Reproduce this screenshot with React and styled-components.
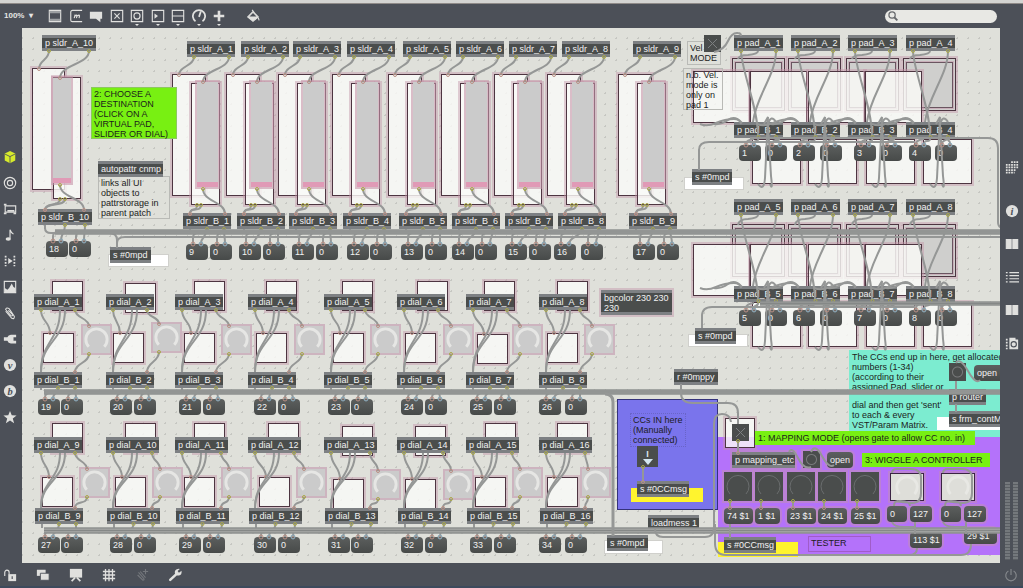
import React, { useState } from "react";
import styled, { createGlobalStyle, css } from "styled-components";

const GlobalStyle = createGlobalStyle`
  * {
    box-sizing: border-box;
  }

  body {
    margin: 0;
    background-color: #4c5058;
    font-family: "Liberation Sans", Arial, sans-serif;
    font-size: 9px;
    line-height: 10px;
  }

  button,
  input,
  select {
    font: inherit;
    margin: 0;
    padding: 0;
  }
`;

/* patch coordinate of the canvas' top left corner */
const ORIGIN = { x: 22, y: 28 };

const Window = styled.div`
  display: flex;
  flex-direction: column;
  min-height: 100vh;
`;

const TitleStrip = styled.div`
  background-color: #d4d4d2;
  border-bottom: 1px solid #8f8a88;
  height: 4px;
`;

const TopBar = styled.header`
  align-items: center;
  background-color: #4c5058;
  display: flex;
  height: 24px;
  padding: 0 26px 0 4px;
`;

const Zoom = styled.label`
  align-items: center;
  color: #e6e6e4;
  display: flex;
  font-size: 8px;
  font-weight: bold;
  gap: 3px;
  margin-right: 14px;

  select {
    appearance: none;
    background: none;
    border: 0;
    color: inherit;
    width: 22px;
  }
`;

const ToolGroup = styled.div`
  display: flex;
  justify-content: space-between;
  width: 180px;
`;

const IconButton = styled.button`
  align-items: center;
  background: none;
  border: 0;
  color: ${({ $color }) => $color || "#e0e0de"};
  display: flex;
  height: 16px;
  justify-content: center;
  position: relative;
  width: 16px;

  svg {
    display: block;
    height: 14px;
    width: 14px;
  }
`;

const Caret = styled.span`
  border: 2px solid transparent;
  border-bottom: 0;
  border-top-color: #e4e4e2;
  bottom: -2px;
  left: 6px;
  position: absolute;
`;

const PaintButton = styled(IconButton)`
  margin-left: 18px;
`;

const Search = styled.label`
  align-items: center;
  background-color: #e8e8e4;
  border-radius: 7px;
  color: #66686c;
  display: flex;
  height: 13px;
  margin-left: auto;
  padding: 0 3px;
  width: 112px;

  svg {
    height: 10px;
    width: 10px;
  }

  input {
    background: none;
    border: 0;
    flex: 1;
    min-width: 0;
    outline: 0;
  }
`;

const Main = styled.main`
  display: flex;
  flex: 1;
`;

const LeftBar = styled.nav`
  align-items: center;
  display: flex;
  flex-direction: column;
  gap: 10px;
  padding: 121px 3px 0 1px;
  width: 22px;
`;

const RightBar = styled.nav`
  align-items: center;
  display: flex;
  flex-direction: column;
  gap: 17px;
  padding-top: 131px;
  width: 23px;

  button:first-child {
    margin-bottom: 11px;
  }
`;

const Meters = styled.div`
  display: flex;
  gap: 3px;
  margin: auto 0 3px;
`;

const Meter = styled.div`
  background: repeating-linear-gradient(#74787c 0 2px, #5a5e63 2px 3px);
  height: 78px;
  width: 5px;
`;

const BottomBar = styled.footer`
  align-items: center;
  border-bottom: 2px solid #3d4a5c;
  display: flex;
  gap: 17px;
  height: 25px;
  padding: 0 4px 0 2px;

  button:last-child {
    margin-left: auto;
  }
`;

const Canvas = styled.section`
  background-color: #dfe0da;
  background-image: radial-gradient(#c6c7c2 1px, transparent 1px);
  background-position: 6px 5px;
  background-size: 11px 11px;
  flex: 1;
  min-width: 0;
  overflow: hidden;
  position: relative;
`;

const placed = css`
  height: ${({ $h }) => ($h ? `${$h}px` : "auto")};
  left: ${({ $x }) => $x - ORIGIN.x}px;
  position: absolute;
  top: ${({ $y }) => $y - ORIGIN.y}px;
  width: ${({ $w }) => $w}px;
`;

const halo = css`
  box-shadow: 0 0 0 2px rgba(196, 148, 168, 0.45);
`;

const ObjectBox = styled.div`
  ${placed}
  background-color: #4a4d4c;
  border: solid #7d8083;
  border-width: 3px 0;
  color: #f2f2f2;
  min-height: 16px;
  padding-left: 3px;
  white-space: pre;
  ${({ $halo }) => $halo && halo}
`;

const MessageBox = styled.button`
  ${placed}
  background: linear-gradient(#5c5f5e, #474a49);
  border: 0;
  border-radius: 4px;
  color: #f2f2f2;
  padding-left: 3px;
  text-align: left;
  white-space: pre;
  ${({ $halo }) => $halo && halo}
`;

const Frame = styled.div`
  ${placed}
  background-color: ${({ $fill }) => $fill || "rgba(250, 250, 248, 0.82)"};
  border: 1px solid #4d3541;
  ${halo}
`;

const PadArea = styled.div`
  ${placed}
  background-color: #cfcfcd;
  border: 1px solid #4d3541;
  ${halo}

  &::before {
    border: 1px solid #6a5560;
    bottom: 2px;
    content: "";
    left: 2px;
    outline: 1px solid #c9b0ba;
    position: absolute;
    right: 2px;
    top: 3px;
  }
`;

const Panel = styled.div`
  ${placed}
  background-color: ${({ $fill }) => $fill};
  border: 1px solid ${({ $line, $fill }) => $line || $fill};
`;

const Comment = styled.div`
  ${placed}
  background-color: ${({ $fill }) => $fill || "transparent"};
  border: 1px ${({ $dotted }) => ($dotted ? "dotted" : "solid")}
    ${({ $line }) => $line || "transparent"};
  color: #1c1c1c;
  padding: 1px 2px;
  white-space: pre;
`;

const Slider = styled.input.attrs({ type: "range" })`
  ${placed}
  appearance: none;
  background: linear-gradient(#cbcbcb calc(100% - 5px), #e09ab6 0);
  direction: rtl;
  outline: 2px solid rgba(196, 148, 168, 0.6);
  writing-mode: vertical-lr;

  &::-webkit-slider-thumb {
    appearance: none;
    height: 1px;
    width: 1px;
  }
`;

const DialBox = styled.label`
  ${placed}
  background-color: ${({ $fill }) => $fill};
  border: ${({ $frame }) => $frame};
  ${({ $halo }) => $halo && halo}

  svg {
    display: block;
    height: 100%;
    width: 100%;
  }

  input {
    height: 100%;
    inset: 0;
    opacity: 0;
    position: absolute;
    width: 100%;
  }
`;

const Toggle = styled.input.attrs({ type: "checkbox" })`
  ${placed}
  appearance: none;
  background:
    linear-gradient(45deg, transparent 46%, #7d8081 46% 54%, transparent 54%)
      center / 9px 9px no-repeat,
    linear-gradient(-45deg, transparent 46%, #7d8081 46% 54%, transparent 54%)
      center / 9px 9px no-repeat,
    #4a4d4c;
`;

const Bang = styled.button`
  ${placed}
  background: radial-gradient(circle, #4a4d4c 4px, #77797a 5px, #4a4d4c 6px);
  border: 0;
  ${({ $halo }) => $halo && halo}
`;

const Receiver = styled.div`
  ${placed}
  align-items: center;
  background-color: #4a4d4c;
  color: #d9e6ee;
  display: flex;
  flex-direction: column;
  font-weight: bold;
  justify-content: center;
`;

const Triangle = styled.span`
  border: 5px solid transparent;
  border-bottom: 0;
  border-top: 6px solid #d3e6f0;
`;

const Cords = styled.svg`
  fill: none;
  height: 100%;
  inset: 0;
  overflow: visible;
  pointer-events: none;
  position: absolute;
  stroke: #959796;
  stroke-width: 2px;
  width: 100%;
`;

const icons = {
  object: (
    <>
      <path d="M1.500 1.500h13v13h-13z" />
      <path d="M2 3.500h12M2 12.500h12" strokeWidth="2.500" stroke="#9c9fa2" />
    </>
  ),
  message: (
    <>
      <path d="M15 1.500H4a2 2 0 0 0-2 2v9a2 2 0 0 0 2 2h11" />
      <path d="M6 10.500l1-4M7 8q2-2 2 0l-.5 2.500M9.500 8q2.500-2 2.500 0l-.5 2.500" />
    </>
  ),
  comment: <path d="M1 3h14v8h-2v4l-5-4H1z" fill="currentColor" stroke="none" />,
  toggle: <path d="M1.500 1.500h13v13h-13zM5 5l6 6M11 5l-6 6" />,
  button: (
    <>
      <path d="M1.500 1.500h13v13h-13z" />
      <circle cx="8" cy="8" r="3.500" />
    </>
  ),
  number: (
    <>
      <path d="M1.500 1.500h13v13h-13z" />
      <path d="M4 5l4 3-4 3z" fill="currentColor" stroke="none" />
    </>
  ),
  slider: <path d="M1.500 1.500h13v13h-13zM2 8h12" />,
  dial: <path d="M4 14A7 7 0 1 1 12 14M8 9l2-6" strokeWidth="2" />,
  plus: <path d="M8 2v12M2 8h12" strokeWidth="3" />,
  paint: (
    <>
      <path d="M2 9l6-6 6 6-6 5zM7 1l3 4" fill="currentColor" />
      <path d="M4 8.500h8l-4-4z" fill="#4c5058" stroke="none" />
      <path d="M14 10l1 3" />
    </>
  ),
  cube: (
    <>
      <path d="M8 1l6 3v8l-6 3-6-3V4z" fill="currentColor" stroke="none" />
      <path d="M2 4.500l6 3 6-3M8 7.500V15" stroke="#4c5058" strokeWidth="1" />
    </>
  ),
  target: (
    <>
      <circle cx="8" cy="8" r="6.500" />
      <circle cx="8" cy="8" r="3" />
    </>
  ),
  device: (
    <>
      <path d="M2.500 4.500h12v7h-12z" />
      <path d="M1 3h3M1 13h3M12 13h3M5 10h8" strokeWidth="2" />
    </>
  ),
  note: (
    <>
      <path d="M8 12V2q1 3 4 5" />
      <ellipse cx="6" cy="12.500" rx="3" ry="2" fill="currentColor" stroke="none" />
    </>
  ),
  sequence: (
    <>
      <path d="M3 2v12M13 2v12" strokeDasharray="2 1.500" strokeWidth="2" />
      <path d="M6 4.500l5 3.500-5 3.500z" fill="currentColor" stroke="none" />
    </>
  ),
  image: (
    <>
      <path d="M1.500 1.500h13v13h-13z" />
      <path d="M2 14V9l3 2 2-2 3-5 2 4 2 1v5z" fill="currentColor" stroke="none" />
    </>
  ),
  clip: <path d="M3 6l7 8q3 1.500 3-2L7 3Q4 1 3 4l6 7q2 1 2-1L6 5" strokeWidth="1.200" />,
  plug: (
    <path d="M15 3v3h-3v4h3v3H9q-3 0-4-3H1V6h4q1-3 4-3z" fill="currentColor" stroke="none" />
  ),
  star: (
    <path
      d="M8 1l2 5 5.500.3-4.300 3.400L12.700 15 8 12l-4.700 3 1.500-5.300L.5 6.300 6 6z"
      fill="currentColor"
      stroke="none"
    />
  ),
  grid: (
    <path
      d="M7 2.500h9M1 5.500h15M1 8.500h15M1 11.500h12M1 14.500h10"
      strokeDasharray="2 1"
      strokeWidth="2"
    />
  ),
  book: <path d="M1.500 3h5.500v10H1.500zM9 3h5.500v10H9z" fill="currentColor" />,
  list: <path d="M1 3h2M5 3h11M1 6.500h2M5 6.500h11M1 10h2M5 10h11M1 13.500h2M5 13.500h11" />,
  camera: (
    <>
      <path d="M5 4V2h7v2h3v11H5z" fill="currentColor" stroke="none" />
      <path d="M2 3v12" strokeDasharray="2 1.500" strokeWidth="2" />
      <circle cx="10" cy="9.500" r="3" stroke="#4c5058" />
    </>
  ),
  lock: (
    <>
      <path d="M2 9V5a2.500 2.500 0 0 1 5 0v2" />
      <path d="M6 7h9v8H6z" fill="currentColor" stroke="none" />
      <path d="M10.500 9.500v3" stroke="#4c5058" />
    </>
  ),
  windows: (
    <>
      <path d="M1 2h10v7H1z" fill="currentColor" stroke="none" />
      <path d="M5 6h10v8H5z" fill="currentColor" stroke="#4c5058" strokeWidth="1" />
    </>
  ),
  easel: (
    <>
      <path d="M1 1h14v10H1z" fill="currentColor" stroke="none" />
      <path d="M7 11l-4 4M9 11l4 4" strokeWidth="2" />
    </>
  ),
  hash: <path d="M4 1v14M8 1v14M12 1v14M1 4h14M1 8h14M1 12h14" strokeWidth="1.500" />,
  addClip: <path d="M3 8l6 6q2 0 1-2L4 5M6 4l6 7M12 1v6M9 4h6" />,
  wrench: (
    <path
      d="M1.500 14.500q-1-1 0-2L8 6.500Q7 3 10 1.500q2-1 3.500-.5L11 3.500l1.500 2L15.500 3q.5 5-3 5.500l-2.500 0L3.500 14.500q-1 1-2 0z"
      fill="currentColor"
      stroke="none"
    />
  ),
  power: <path d="M5 3.500a6 6 0 1 0 6 0M8 1v7" />,
  search: (
    <>
      <circle cx="6.500" cy="6.500" r="5" strokeWidth="2" />
      <path d="M10 10l5 5" strokeWidth="3" />
    </>
  ),
};

const badge = (letter) => (
  <>
    <circle cx="8" cy="8" r="7" fill="currentColor" stroke="none" />
    <text
      x="8"
      y="12"
      fill="#4c5058"
      stroke="none"
      fontFamily="Liberation Serif, serif"
      fontSize="12"
      fontStyle="italic"
      fontWeight="bold"
      textAnchor="middle"
    >
      {letter}
    </text>
  </>
);

icons.info = badge("i");
icons.vizzie = badge("v");
icons.beap = badge("b");

const Icon = ({ name }) => (
  <svg viewBox="0 0 16 16" fill="none" stroke="currentColor" strokeWidth="1.300">
    {icons[name]}
  </svg>
);

const Dial = ({ label, fill = "#cbcbcb", ring = "#e6e6e4", frame, thin, ...rest }) => (
  <DialBox $fill={fill} $frame={frame || "2px solid #cdb4bf"} {...rest}>
    <svg viewBox="0 0 28 28" fill="none" stroke={ring}>
      <path d="M6 21.500A11 11 0 1 1 22 21.500" strokeWidth={thin ? 1 : 3} />
    </svg>
    <input type="range" aria-label={label} defaultValue={0} />
  </DialBox>
);

const sliders = [
  { n: 1, x: 187, num: 186, zero: 210 },
  { n: 2, x: 241, num: 239, zero: 263 },
  { n: 3, x: 293, num: 292, zero: 316 },
  { n: 4, x: 347, num: 347, zero: 370 },
  { n: 5, x: 403, num: 401, zero: 425 },
  { n: 6, x: 456, num: 452, zero: 475 },
  { n: 7, x: 509, num: 505, zero: 529 },
  { n: 8, x: 562, num: 554, zero: 581 },
  { n: 9, x: 633, num: 633, zero: 657 },
];

const dialRows = [
  {
    aY: 294,
    bY: 372,
    numY: 399,
    busY: 390,
    bShift: 0,
    dials: [
      { n: 1, x: 34, top: [52, 281], low: [43, 333], dial: [81, 324], num: 38, zero: 61 },
      { n: 2, x: 106, top: [125, 283], low: [113, 333], dial: [151, 322], num: 110, zero: 134 },
      { n: 3, x: 175, top: [194, 281], low: [184, 333], dial: [221, 324], num: 179, zero: 203 },
      { n: 4, x: 248, top: [266, 281], low: [256, 333], dial: [294, 324], num: 254, zero: 278 },
      { n: 5, x: 324, top: [342, 281], low: [333, 333], dial: [370, 324], num: 328, zero: 351 },
      { n: 6, x: 397, top: [417, 281], low: [405, 333], dial: [443, 324], num: 401, zero: 425 },
      { n: 7, x: 466, top: [484, 281], low: [477, 334], dial: [512, 324], num: 470, zero: 494 },
      { n: 8, x: 539, top: [557, 281], low: [547, 333], dial: [584, 324], num: 539, zero: 565 },
    ],
  },
  {
    aY: 437,
    bY: 508,
    numY: 537,
    busY: 528,
    bShift: 1,
    dials: [
      { n: 9, x: 34, top: [52, 423], low: [42, 477], dial: [79, 467], num: 38, zero: 61 },
      { n: 10, x: 106, top: [125, 423], low: [115, 477], dial: [152, 467], num: 110, zero: 134 },
      { n: 11, x: 175, top: [194, 423], low: [184, 477], dial: [221, 467], num: 179, zero: 203 },
      { n: 12, x: 248, top: [268, 423], low: [259, 477], dial: [296, 467], num: 254, zero: 278 },
      { n: 13, x: 324, top: [342, 426], low: [333, 479], dial: [370, 469], num: 328, zero: 351 },
      { n: 14, x: 397, top: [415, 426], low: [405, 479], dial: [443, 469], num: 401, zero: 425 },
      { n: 15, x: 466, top: [485, 423], low: [475, 477], dial: [512, 467], num: 470, zero: 494 },
      { n: 16, x: 539, top: [557, 423], low: [547, 477], dial: [580, 467], num: 539, zero: 565 },
    ],
  },
];

const pads = [
  { x: 734, frame: 732, white: 693, low: 752, num: 739, zero: 765 },
  { x: 791, frame: 788, white: 750, low: 808, num: 793, zero: 820 },
  { x: 848, frame: 846, white: 808, low: 866, num: 854, zero: 880 },
  { x: 906, frame: 903, white: 865, low: 923, num: 909, zero: 935 },
];

const padRows = [
  { first: 1, aY: 35, frameY: 58, whiteY: 71, bY: 122, lowY: 139, numY: 145 },
  { first: 5, aY: 199, frameY: 224, whiteY: 244, bY: 286, lowY: 302, numY: 310 },
];

const curve = (x1, y1, x2, y2) => {
  const k = Math.max(8, Math.abs(y2 - y1) * 0.5);
  return `M${x1} ${y1}C${x1} ${y1 + k} ${x2} ${y2 - k} ${x2} ${y2}`;
};

const Cord = ({ from, to }) => (
  <>
    <path d={curve(...from, ...to)} />
    <circle cx={from[0]} cy={from[1]} r="1.500" stroke="#a9a84a" strokeWidth="1" />
    <circle cx={to[0]} cy={to[1]} r="1.500" stroke="#b98f84" strokeWidth="1" />
  </>
);

const NumberCords = ({ x, w, y, busY, num, zero, numY }) => (
  <>
    <Cord from={[x + w / 2, y]} to={[num + 15, numY]} />
    <Cord from={[x + w - 7, y]} to={[zero + 15, numY]} />
    <path d={`M${x + 7} ${y}V${busY}`} />
    <path d={`M${num + 7} ${numY}V${busY + 7}q0 -4 8 -5`} />
    <path d={`M${zero + 7} ${numY}V${busY + 7}q0 -4 8 -5`} />
    <circle cx={num + 7} cy={numY} r="2" stroke="#b98f84" strokeWidth="1" />
    <circle cx={zero + 7} cy={numY} r="2" stroke="#b98f84" strokeWidth="1" />
    <circle cx={num + 15} cy={numY} r="2" stroke="#7fa9bd" strokeWidth="1" />
    <circle cx={zero + 15} cy={numY} r="2" stroke="#7fa9bd" strokeWidth="1" />
  </>
);

const Message = ({ children, w = 22, h = 16, ...rest }) => (
  <MessageBox type="button" $w={w} $h={h} {...rest}>
    {children}
  </MessageBox>
);

const SliderUnit = ({ n, x, num, zero }) => (
  <>
    <Frame $x={x - 15} $y={74} $w={34} $h={122} />
    <Frame $x={x + 4} $y={83} $w={29} $h={122} />
    <Slider $x={x + 10} $y={82} $w={21} $h={105} aria-label={`Slider ${n}`} defaultValue={0} />
    <ObjectBox $x={x} $y={41} $w={48}>{`p sldr_A_${n}`}</ObjectBox>
    <ObjectBox $x={x - 4} $y={213} $w={48}>{`p sldr_B_${n}`}</ObjectBox>
    <Message $x={num} $y={244}>{n + 8}</Message>
    <Message $x={zero} $y={244}>0</Message>
  </>
);

const SliderCords = ({ x, num, zero }) => (
  <>
    <Cord from={[x + 7, 57]} to={[x - 8, 75]} />
    <Cord from={[x + 42, 57]} to={[x + 16, 82]} />
    <Cord from={[x + 16, 189]} to={[x + 38, 214]} />
    <Cord from={[x + 10, 205]} to={[x + 3, 214]} />
    <Cord from={[x + 14, 205]} to={[x + 3, 214]} />
    <NumberCords x={x - 4} w={48} y={229} busY={230} num={num} zero={zero} numY={244} />
  </>
);

const DialUnit = ({ row, unit }) => {
  const { n, x, top, low, dial, num, zero } = unit;
  const width = n > 9 ? 53 : 48;

  return (
    <>
      <Frame $x={top[0]} $y={top[1]} $w={31} $h={30} />
      <Frame $x={low[0]} $y={low[1]} $w={31} $h={30} />
      <Dial label={`Dial ${n}`} $x={dial[0]} $y={dial[1]} $w={31} $h={31} />
      <ObjectBox $x={x} $y={row.aY} $w={width}>{`p dial_A_${n}`}</ObjectBox>
      <ObjectBox $x={x + row.bShift} $y={row.bY} $w={width}>{`p dial_B_${n}`}</ObjectBox>
      <Message $x={num} $y={row.numY}>{n + 18}</Message>
      <Message $x={zero} $y={row.numY}>0</Message>
    </>
  );
};

const DialCords = ({ row, unit }) => {
  const { n, x, low, dial, num, zero } = unit;
  const width = n > 9 ? 53 : 48;
  const out = row.aY + 16;
  const right = x + width - 7;

  return (
    <>
      <Cord from={[x + 7, out]} to={[low[0] + 7, low[1]]} />
      <path d={curve(x + 26, out, x + 7, row.bY)} />
      <path d={curve(x + 31, out, x + 7, row.bY)} />
      <Cord from={[right, out]} to={[dial[0] + 8, dial[1] + 2]} />
      <Cord from={[dial[0] + 8, dial[1] + 30]} to={[right, row.bY]} />
      <NumberCords
        x={x + row.bShift}
        w={width}
        y={row.bY + 16}
        busY={row.busY}
        num={num}
        zero={zero}
        numY={row.numY}
      />
    </>
  );
};

const PadRow = ({ row }) => (
  <>
    {pads.map(({ x, frame }) => (
      <PadArea key={x} $x={frame} $y={row.frameY} $w={53} $h={53} />
    ))}
    {pads.map(({ x, white, low }) => (
      <React.Fragment key={x}>
        <Frame $x={white} $y={row.whiteY} $w={57} $h={52} />
        <Frame $x={low} $y={row.lowY} $w={49} $h={45} />
      </React.Fragment>
    ))}
    {pads.map(({ x, num, zero }, i) => (
      <React.Fragment key={x}>
        <ObjectBox $x={x} $y={row.aY} $w={49}>{`p pad_A_${row.first + i}`}</ObjectBox>
        <ObjectBox $x={x} $y={row.bY} $w={49}>{`p pad_B_${row.first + i}`}</ObjectBox>
        <Message $x={num} $y={row.numY}>{row.first + i}</Message>
        <Message $x={zero} $y={row.numY}>0</Message>
      </React.Fragment>
    ))}
  </>
);

const PadCords = ({ row, pad: { x, num, zero } }) => {
  const { aY, bY, frameY, lowY, numY } = row;
  const out = aY + 16;
  const end = lowY + 45;

  return (
    <>
      <path d={`M${x + 7} ${out}C${x + 8} ${out + 22} ${x + 24} ${bY - 15} ${x + 24} ${bY + 14}`} />
      <path d={`M${x + 42} ${out}C${x + 42} ${out + 24} ${x + 22} ${bY - 26} ${x + 19} ${bY}`} />
      <path d={`M${x + 24} ${out}q0 3 -10 4q-9 0 -10 ${frameY - out - 3}`} />
      <path d={`M${x - 34} ${bY + 2}q7 3 16 -1t18 -4q6 0 7 5`} />
      <path d={`M${x - 20} ${bY + 2}q7 1 14 -4t14 3`} />
      <path d={`M${x + 24} ${end}q6 8 7 -6L${x + 34} ${bY - 5}L${x + 30} ${bY + 2}`} />
      <path d={`M${x + 36} ${end}q3 8 1 -8L${x + 34} ${bY + 2}q3 -10 8 -2`} />
      <NumberCords x={x} w={49} y={bY + 15} busY={bY + 15} num={num} zero={zero} numY={numY} />
      <circle cx={x + 7} cy={out} r="1.500" stroke="#a9a84a" strokeWidth="1" />
      <circle cx={x + 42} cy={out} r="1.500" stroke="#a9a84a" strokeWidth="1" />
    </>
  );
};

const Bus = ({ x, y, lines }) => (
  <>
    <path d={`M${x} ${y + lines / 2}H2000`} stroke="#a0a2a0" strokeWidth={lines + 1} />
    <path
      d={`M${x} ${y}H2000M${x} ${y + lines}H2000M${x} ${y + lines / 2}H2000`}
      stroke="#858887"
      strokeWidth="1"
    />
  </>
);

const testerDials = [
  { x: 724, w: 29, text: "74 $1" },
  { x: 755, w: 25, text: "1 $1" },
  { x: 787, w: 29, text: "23 $1" },
  { x: 818, w: 29, text: "24 $1" },
  { x: 851, w: 29, text: "25 $1" },
];

const Patch = () => {
  const [mapping, setMapping] = useState(false);

  return (
    <Canvas>
      {/* slider 10 stands apart from the others */}
      <Frame $x={32} $y={68} $w={33} $h={122} />
      <Frame $x={53} $y={77} $w={28} $h={122} />
      <Slider $x={53} $y={78} $w={18} $h={105} aria-label="Slider 10" defaultValue={0} />
      <ObjectBox $x={42} $y={35} $w={54}>p sldr_A_10</ObjectBox>
      <ObjectBox $x={38} $y={209} $w={54}>p sldr_B_10</ObjectBox>
      <Message $x={46} $y={241}>18</Message>
      <Message $x={69} $y={241}>0</Message>

      {sliders.map((unit) => (
        <SliderUnit key={unit.n} {...unit} />
      ))}
      {dialRows.map((row) =>
        row.dials.map((unit) => <DialUnit key={unit.n} row={row} unit={unit} />)
      )}
      {padRows.map((row) => (
        <PadRow key={row.first} row={row} />
      ))}

      {/* instructions and notes */}
      <Comment $x={91} $y={87} $w={86} $h={52} $fill="#78f012" $line="#8cc860">
        {"2: CHOOSE A\nDESTINATION\n(CLICK ON A\nVIRTUAL PAD,\nSLIDER OR DIAL)"}
      </Comment>
      <Comment $x={98} $y={176} $w={72} $h={43} $line="#b9bab6">
        {"links all UI\nobjects to\npattrstorage in\nparent patch"}
      </Comment>
      <ObjectBox $x={98} $y={161} $w={65}>autopattr cnmp</ObjectBox>
      <Comment $x={687} $y={41} $w={34} $h={24} $line="#b9bab6">{"Vel\nMODE"}</Comment>
      <Comment $x={683} $y={68} $w={40} $h={42} $line="#b9bab6">
        {"n.b. Vel.\nmode is\nonly on\npad 1"}
      </Comment>
      <Toggle $x={704} $y={35} $w={17} $h={17} aria-label="Velocity mode" />

      <Panel $x={108} $y={254} $w={61} $h={13} $fill="#fff" $line="#d0d0cc" />
      <ObjectBox $x={110} $y={247} $w={41}>s #0mpd</ObjectBox>
      <Panel $x={684} $y={177} $w={60} $h={13} $fill="#fff" $line="#d0d0cc" />
      <ObjectBox $x={692} $y={169} $w={40}>s #0mpd</ObjectBox>
      <Panel $x={688} $y={334} $w={60} $h={13} $fill="#fff" $line="#d0d0cc" />
      <ObjectBox $x={695} $y={328} $w={41}>s #0mpd</ObjectBox>
      <Panel $x={604} $y={540} $w={59} $h={14} $fill="#fff" $line="#d0d0cc" />
      <ObjectBox $x={607} $y={535} $w={41}>s #0mpd</ObjectBox>
      <ObjectBox $x={601} $y={290} $w={71} $h={25} $halo>{"bgcolor 230 230\n230"}</ObjectBox>
      <ObjectBox $x={674} $y={369} $w={44}>r #0mppy</ObjectBox>
      <ObjectBox $x={648} $y={515} $w={51}>loadmess 1</ObjectBox>

      {/* CC input */}
      <Panel $x={617} $y={399} $w={101} $h={111} $fill="#7a74ec" $line="#34327a" />
      <Comment $x={630} $y={413} $w={56} $h={34} $line="#6964c8" $dotted>
        {"CCs IN here\n(Manually\nconnected)"}
      </Comment>
      <Receiver $x={637} $y={446} $w={21} $h={21}>
        I
        <Triangle />
      </Receiver>
      <Panel $x={631} $y={488} $w={72} $h={14} $fill="#fff42e" />
      <ObjectBox $x={637} $y={481} $w={52}>s #0CCmsg</ObjectBox>

      {/* router */}
      <Panel $x={849} $y={350} $w={400} $h={87} $fill="#7cecd0" />
      <Comment $x={849} $y={350} $w={151} $h={43}>
        {"The CCs end up in here, get allocated r\nnumbers (1-34)\n(according to their\nassigned Pad, slider or"}
      </Comment>
      <Comment $x={849} $y={398} $w={80} $h={34}>
        {"dial and then get 'sent'\nto each & every\nVST/Param Matrix."}
      </Comment>
      <Bang $x={949} $y={363} $w={17} $h={18} aria-label="Open router" />
      <Message $x={974} $y={365} w={36}>open</Message>
      <ObjectBox $x={949} $y={389} $w={37}>p router</ObjectBox>
      <Panel $x={937} $y={417} $w={120} $h={13} $fill="#fff" />
      <ObjectBox $x={949} $y={411} $w={80}>s frm_contMatrix</ObjectBox>

      {/* mapping and tester */}
      <Panel $x={718} $y={437} $w={500} $h={118} $fill="#b472fa" />
      <Frame $x={725} $y={418} $w={30} $h={30} />
      <Toggle
        $x={732}
        $y={424}
        $w={17}
        $h={17}
        aria-label="Mapping mode"
        checked={mapping}
        onChange={() => setMapping(!mapping)}
      />
      <Comment $x={755} $y={431} $w={220} $h={14} $fill="#78f012">
        1: MAPPING MODE (opens gate to allow CC no. in)
      </Comment>
      <ObjectBox $x={732} $y={452} $w={63} $halo>p mapping_etc</ObjectBox>
      <Bang $x={803} $y={451} $w={17} $h={17} $halo aria-label="Open mapping" />
      <Message $x={827} $y={452} w={26} $halo>open</Message>
      <Comment $x={862} $y={453} $w={128} $h={14} $fill="#78f012">
        3: WIGGLE A CONTROLLER
      </Comment>
      {testerDials.map(({ x, w, text }) => (
        <React.Fragment key={text}>
          <Dial
            label={text}
            fill="#4a4d4c"
            ring="#6a6d6e"
            frame="0"
            thin
            $halo
            $x={x}
            $y={472}
            $w={28}
            $h={29}
          />
          <Message $x={x} $y={508} w={w} $halo>{text}</Message>
        </React.Fragment>
      ))}
      {[890, 941].map((x) => (
        <Dial
          key={x}
          label={`Tester ${x}`}
          fill="#deded9"
          ring="#e8e8e4"
          frame="1px solid #3b2444"
          $halo
          $x={x}
          $y={473}
          $w={34}
          $h={28}
        />
      ))}
      <Message $x={887} $y={506} w={20} $halo>0</Message>
      <Message $x={910} $y={506} $halo>127</Message>
      <Message $x={941} $y={506} w={20} $halo>0</Message>
      <Message $x={964} $y={506} $halo>127</Message>
      <Message $x={910} $y={532} w={32} $halo>113 $1</Message>
      <Message $x={964} $y={528} w={33} $halo>29 $1</Message>
      <Panel $x={718} $y={542} $w={80} $h={15} $fill="#fff42e" />
      <ObjectBox $x={724} $y={537} $w={52}>s #0CCmsg</ObjectBox>
      <Comment $x={808} $y={536} $w={63} $h={16} $line="#a05cc8">TESTER</Comment>

      <Cords>
        <g transform={`translate(${-ORIGIN.x} ${-ORIGIN.y})`}>
          <Cord from={[49, 51]} to={[39, 69]} />
          <Cord from={[89, 51]} to={[60, 78]} />
          <Cord from={[60, 185]} to={[84, 210]} />
          <Cord from={[60, 199]} to={[45, 210]} />
          <Cord from={[65, 199]} to={[45, 210]} />
          <NumberCords x={38} w={54} y={225} busY={229} num={46} zero={69} numY={241} />
          <path d="M117 248V240q0 -7 -8 -7" />
          <path d="M117 248V243q0 -6 8 -6H2000" />
          <path d="M45 225v3q0 5 6 5H110" />
          {sliders.map((unit) => (
            <SliderCords key={unit.n} {...unit} />
          ))}
          {dialRows.map((row) =>
            row.dials.map((unit) => <DialCords key={unit.n} row={row} unit={unit} />)
          )}
          {padRows.map((row) =>
            pads.map((pad) => <PadCords key={row.first + pad.x} row={row} pad={pad} />)
          )}
          <Bus x={55} y={230} lines={4} />
          <Bus x={44} y={390} lines={4} />
          <Bus x={44} y={528} lines={5} />
          <Bus x={760} y={302} lines={3} />
          <path d="M714 52Q724 50 728 41T738 33q3 0 3 3" />
          <path d="M699 170V150q0 -8 10 -8H915" />
          <path d="M750 138H988q10 0 10 10V222q0 6 6 6" />
          <path d="M702 328V316q0 -9 10 -9H915" />
          <path d="M605 394q8 0 8 8V536" strokeWidth="3" />
          <Cord from={[643, 467]} to={[643, 482]} />
          <path d="M681 384V393q0 10 12 10H728q10 0 10 10V424" />
          <path d="M655 529q0 8 8 8H705q9 0 9 -10V424q0 -10 8 -10t9 8" />
          <Cord from={[738, 441]} to={[738, 453]} />
          <path d="M789 452q3 -6 9 6t13 9M811 452q4 -9 11 4t12 9" />
          <path d="M956 363q4 -6 12 8t12 9" />
          <path d="M956 381v9M956 404v8" />
          {testerDials.map(({ x }) => (
            <Cord key={x} from={[x + 6, 501]} to={[x + 6, 508]} />
          ))}
          <path d="M730 524v14" />
          {[890, 941].map((x) => (
            <path
              key={x}
              d={`M${x + 4} 506q0 -5 4 -5M${x + 20} 506q0 -5 -10 -5t12 2q9 0 9 -10V478q0 -9 -10 -9h-14q-5 0 -5 4M${x + 2} 522q2 5 12 5h10M${x + 25} 522v12`}
            />
          ))}
          <path d="M917 548q0 7 -8 7M971 544q0 11 -10 11H726q-11 0 -11 -12V524" />
        </g>
      </Cords>
    </Canvas>
  );
};

const tools = [
  { name: "object" },
  { name: "message" },
  { name: "comment" },
  { name: "toggle" },
  { name: "button", menu: true },
  { name: "number", menu: true },
  { name: "slider", menu: true },
  { name: "dial", menu: true },
  { name: "plus", menu: true },
];

const browsers = [
  "target",
  "device",
  "note",
  "sequence",
  "image",
  "clip",
  "plug",
  "vizzie",
  "beap",
  "star",
];

const App = () => (
  <Window>
    <GlobalStyle />
    <TitleStrip />
    <TopBar>
      <Zoom>
        <select aria-label="Zoom" defaultValue="100%">
          <option>100%</option>
        </select>
        ▾
      </Zoom>
      <ToolGroup>
        {tools.map(({ name, menu }) => (
          <IconButton key={name} type="button" aria-label={name}>
            <Icon name={name} />
            {menu && <Caret />}
          </IconButton>
        ))}
      </ToolGroup>
      <PaintButton type="button" aria-label="paint">
        <Icon name="paint" />
      </PaintButton>
      <Search>
        <Icon name="search" />
        <input type="text" aria-label="Search" />
      </Search>
    </TopBar>
    <Main>
      <LeftBar>
        <IconButton type="button" aria-label="cube" $color="#d6ea2c">
          <Icon name="cube" />
        </IconButton>
        {browsers.map((name) => (
          <IconButton key={name} type="button" aria-label={name}>
            <Icon name={name} />
          </IconButton>
        ))}
      </LeftBar>
      <Patch />
      <RightBar>
        {["grid", "info", "book", "list", "book", "camera"].map((name, i) => (
          <IconButton key={i} type="button" aria-label={name}>
            <Icon name={name} />
          </IconButton>
        ))}
        <Meters>
          <Meter />
          <Meter />
        </Meters>
      </RightBar>
    </Main>
    <BottomBar>
      {["lock", "windows", "easel", "hash"].map((name) => (
        <IconButton key={name} type="button" aria-label={name}>
          <Icon name={name} />
        </IconButton>
      ))}
      <IconButton type="button" aria-label="add clip" $color="#74777c">
        <Icon name="addClip" />
      </IconButton>
      <IconButton type="button" aria-label="wrench">
        <Icon name="wrench" />
      </IconButton>
      <IconButton type="button" aria-label="power" $color="#85888c">
        <Icon name="power" />
      </IconButton>
    </BottomBar>
  </Window>
);

export default App;
